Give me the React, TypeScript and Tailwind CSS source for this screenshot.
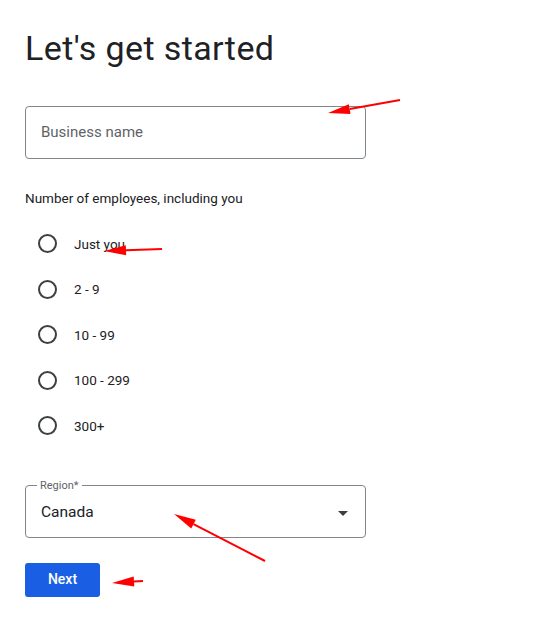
import { useState } from "react";

const sizes = ["Just you", "2 - 9", "10 - 99", "100 - 299", "300+"];

function Arrow({ x1, y1, x2, y2 }: { x1: number; y1: number; x2: number; y2: number }) {
  // arrow pointing from (x1,y1) to tip (x2,y2)
  const dx = x2 - x1;
  const dy = y2 - y1;
  const len = Math.hypot(dx, dy);
  const ux = dx / len;
  const uy = dy / len;
  const hl = 22;
  const hw = 5;
  const bx = x2 - ux * hl;
  const by = y2 - uy * hl;
  const p1 = `${bx - uy * hw},${by + ux * hw}`;
  const p2 = `${bx + uy * hw},${by - ux * hw}`;
  return (
    <g>
      <line x1={x1} y1={y1} x2={bx} y2={by} stroke="#f00" strokeWidth="2" />
      <polygon points={`${x2},${y2} ${p1} ${p2}`} fill="#f00" />
    </g>
  );
}

export default function App() {
  const [size, setSize] = useState<string | null>(null);
  return (
    <main className="relative min-h-[639px] w-[552px] bg-white pl-[25px] pt-[28px] font-['Roboto',sans-serif] text-[#202124]">
      <h1 className="text-[34px] leading-[40px] font-normal tracking-[0.4px] text-[#202124]">
        Let's get started
      </h1>

      <div className="mt-[38px] flex h-[53px] w-[341px] items-center rounded-[4px] border border-[#80868b] px-[15px]">
        <input
          className="w-full bg-transparent text-[15px] text-[#3c4043] placeholder:text-[#5f6368] outline-none"
          placeholder="Business name"
        />
      </div>

      <p className="mt-[31px] text-[13.5px] leading-[16px] text-[#202124]">
        Number of employees, including you
      </p>

      <div className="mt-[15px] flex flex-col">
        {sizes.map((s) => (
          <label key={s} className="flex h-[45.5px] cursor-pointer items-center">
            <span className="ml-[13px] flex h-[19px] w-[19px] items-center justify-center rounded-full border-2 border-[#3c4043]">
              {size === s && <span className="h-[9px] w-[9px] rounded-full bg-[#1a73e8]" />}
            </span>
            <input type="radio" className="hidden" checked={size === s} onChange={() => setSize(s)} />
            <span className="ml-[17px] text-[13.5px] text-[#202124]">{s}</span>
          </label>
        ))}
      </div>

      <fieldset className="mt-[31px] flex h-[58px] w-[341px] items-center rounded-[4px] border border-[#80868b] px-[15px] pb-[2px]">
        <legend className="ml-[-4px] px-[3px] text-[11px] leading-[12px] text-[#5f6368]">Region*</legend>
        <span className="flex-1 text-[15.5px] text-[#202124]">Canada</span>
        <svg width="10" height="5" viewBox="0 0 10 5" className="mr-[2px]">
          <path d="M0 0h10L5 5z" fill="#3c4043" />
        </svg>
      </fieldset>

      <button className="mt-[25px] h-[34px] w-[75px] rounded-[3px] bg-[#1a5fe3] text-[14px] font-medium text-white">
        Next
      </button>

      <svg className="pointer-events-none absolute left-0 top-0" width="552" height="639">
        <Arrow x1={400} y1={100} x2={328} y2={113} />
        <Arrow x1={162} y1={249} x2={104} y2={251} />
        <Arrow x1={265} y1={561} x2={174} y2={514} />
        <Arrow x1={143} y1={581} x2={112} y2={583} />
      </svg>
    </main>
  );
}
